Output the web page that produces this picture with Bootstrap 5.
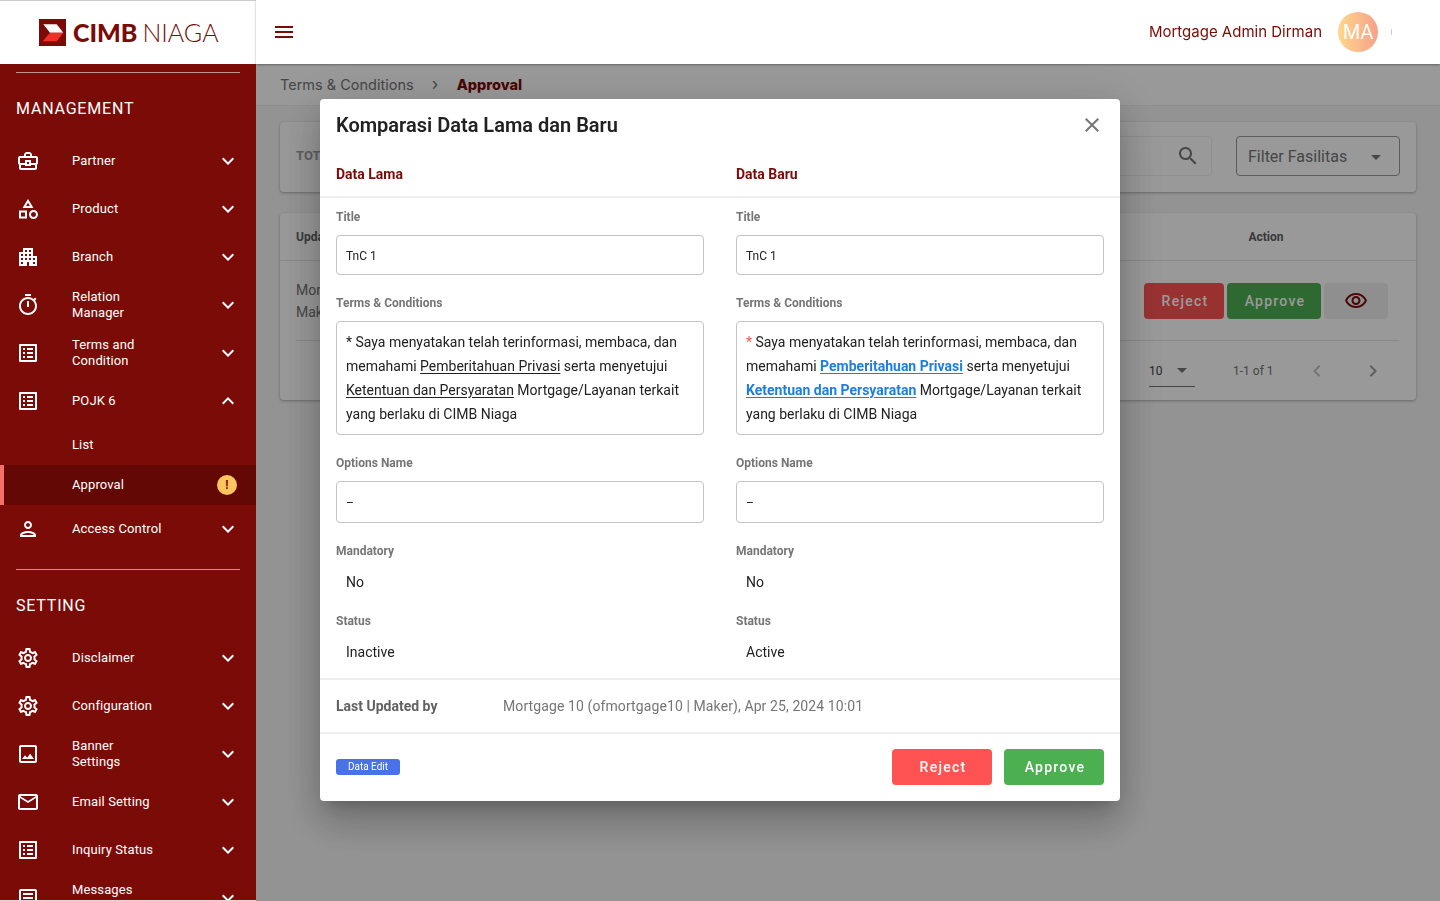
<!DOCTYPE html>
<html lang="id">
<head>
<meta charset="utf-8">
<title>Approval</title>
<link href="https://cdn.jsdelivr.net/npm/bootstrap@5.3.0/dist/css/bootstrap.min.css" rel="stylesheet">
<style>
html,body{height:100%;overflow:hidden}
body{font-family:Roboto,"Liberation Sans",sans-serif;background:#f6f6f6;color:#212121;font-size:14px}
.app-shell{height:901px}
.side{width:256px;flex:none;background:#7a0b07;color:#fff;overflow:hidden;position:relative;z-index:1050;height:901px;border-bottom:1px solid #d8d8d8}
.brand{height:64px;background:#fff;border-top:1px solid #ccc;padding-left:39px}
.brand-name{font-family:Lato,sans-serif;color:#7a0b07;font-size:25px;line-height:27px;margin-left:7px;white-space:nowrap}
.brand-name b{font-weight:900}
.brand-name span{font-weight:300;margin-left:5px}
.side-rule{height:1px;background:rgba(255,255,255,.55);margin:0 16px}
.side-head{height:64px;padding:24px 16px 0;font-size:16px;line-height:24px;font-weight:400;letter-spacing:.8px}
.side-row{height:48px;padding:0 16px;font-size:13px;font-weight:400;letter-spacing:.12px;line-height:16px}
.side-row .ico{width:24px;height:24px;fill:#fff;flex:none;margin-right:32px}
.side-row .chev{width:24px;height:24px;fill:#fff;flex:none;margin-left:auto}
.sub-row{padding-left:72px;height:40px}
.sub-on{height:40px;background:#630805;border-left:4px solid #f47068;padding-left:68px;padding-right:19px}
.warn-dot{width:20px;height:20px;border-radius:50%;background:#fdc55e;color:#7a0b07;font-size:12px;font-weight:700;margin-left:auto}
.msg-label{padding-bottom:16px}
.mainp{min-width:0}
.topbar{height:64px;background:#fff;position:relative;z-index:1050;padding:0 48px 0 16px;box-shadow:0 1px 2px rgba(0,0,0,.35)}
.poppin{font-family:Inter,"Open Sans",sans-serif}
.top-user{color:#7a0b07;font-size:15px}
.avatar{width:40px;height:40px;border-radius:50%;background:linear-gradient(90deg,#fdd88b,#f8a08a);color:#fff;font-size:20px;margin-left:16px}
.top-tick{width:1px;height:6px;background:#ccc;margin-left:13px}
.crumbs{height:42px;background:#fff;padding:0 24px;border-bottom:1px solid #eee;font-size:14.5px;color:#757575}
.crumbs b{color:#7a0b07;font-weight:800}
.crumb-sep{width:43px;text-align:center;font-size:17px;line-height:1}
.canvas{padding:16px 24px}
.pane{background:#fff;border-radius:4px;box-shadow:0 1px 3px rgba(0,0,0,.3)}
.pane-top{height:70px;padding:13px 16px 15px;margin-bottom:21px}
.pane-tot{color:#9e9e9e;font-weight:700;font-size:13px}
.search-box{width:300px;height:40px;border:1px solid #eee;border-radius:4px;padding:0 11px 0 12px;margin-left:auto;margin-right:24px}
.search-box svg{margin-left:auto;fill:#757575}
.filter-box{width:164px;height:40px;border:1px solid #9a9a9a;border-radius:4px;padding:2px 18px 0 11px;font-size:16px;color:#757575}
.caret-d{width:0;height:0;border:5px solid transparent;border-top-color:#757575;border-bottom:0;margin-left:auto}
.pane-tab{height:187px;padding:0 16px}
.tab-head{height:48px;font-size:12px;font-weight:700;color:#616161;border-bottom:1px solid #e4e4e4;margin:0 -16px;padding:0 16px}
.tab-act{width:268px;margin-left:auto;text-align:center}
.tab-row{height:80px;color:#757575;border-bottom:1px solid #e4e4e4;margin-right:1px;line-height:22px}
.act-group{gap:3px;margin-right:11px}
.act-btn{height:36px;border:0;border-radius:4px;color:#fff;font-size:14px;font-weight:500;letter-spacing:1.25px;padding:1px 0 0 2px}
.btn-rej{background:#ff5252;color:#fff}
.btn-rej:hover{background:#ff5252;color:#fff}
.btn-app{background:#4caf50;color:#fff}
.btn-app:hover{background:#4caf50;color:#fff}
.tab-row .btn-rej{width:80px}
.tab-row .btn-app{width:94px}
.eye-btn{width:64px;height:36px;background:#eee;border-radius:4px;fill:#7a0b07}
.pager{height:59px;font-size:12px;color:#757575}
.pager-size{width:46px;height:32px;border-bottom:1px solid #757575;color:#424242;margin-left:auto;margin-top:1px}
.pager-size .caret-d{margin-right:8px}
.pager-count{width:40px;margin-left:38px;white-space:nowrap}
.pager-nav{fill:#9e9e9e;width:24px;height:24px;margin-left:32px}
.pager-prev{fill:#c4c4c4}
.pager-next{margin-right:15px}
.screen{position:fixed;inset:0;z-index:1040;background:rgba(0,0,0,.4);padding-top:99px}
.compare{width:800px;height:702px;margin:0 auto;background:#fff;border:0;border-radius:4px;box-shadow:0 11px 15px -7px rgba(0,0,0,.2),0 24px 38px 3px rgba(0,0,0,.14),0 9px 46px 8px rgba(0,0,0,.12)}
.cmp-title{height:65px;padding:14px 16px 0}
.cmp-title h2{font-size:20px;line-height:24px;font-weight:600;margin:0;color:#212121}
.cmp-title svg{width:24px;height:24px;fill:#757575;margin-left:auto}
.cmp-heads{color:#7a0b07;font-weight:700;font-size:14px;line-height:20px;height:34px;border-bottom:2px solid #eee;margin:0;--bs-gutter-x:0}
.cmp-heads>div,.cmp-cols>div{padding:0 16px}
.cmp-cols{padding-top:11px;height:482px;border-bottom:2px solid #eee;margin:0;--bs-gutter-x:0}
.fld-label{font-size:12px;line-height:16px;font-weight:700;color:#757575;margin-bottom:10px}
.fld-box{border:1px solid #c4c4c4;border-radius:4px;padding:0 9px;color:#212121;font-size:14px;margin-bottom:20px}
.fld-sm{height:40px;font-size:12px;padding-top:2px}
.fld-md{height:42px;font-size:12px;padding-top:2px}
.fld-text{padding:8px 9px;line-height:24px;height:114px}
.fld-text u{text-underline-offset:2px}
.fld-link{color:#1e7ee0;font-weight:700;text-decoration:underline;text-underline-offset:2px}
.fld-star{color:#ff5252}
.fld-val{line-height:24px;padding:1px 0 0 10px;margin-bottom:19px}
.cmp-meta{height:54px;padding:0 16px;border-bottom:2px solid #eee}
.cmp-meta b{width:167px;font-weight:700;color:#616161}
.cmp-meta span{color:#757575;letter-spacing:.1px}
.cmp-foot{padding:15px 16px 0}
.tag-edit{width:64px;height:16px;background:#4a72e8;color:#fff;border-radius:3px;font-size:10px;line-height:16px;text-align:center}
.cmp-foot .act-btn{width:100px}
</style>
</head>
<body>
<svg width="0" height="0" class="d-none">
<symbol id="i-bag" viewBox="0 0 24 24"><path d="M20 7h-4V5l-2-2h-4L8 5v2H4c-1.1 0-2 .9-2 2v5c0 .75.4 1.38 1 1.73V19c0 1.11.89 2 2 2h14c1.11 0 2-.89 2-2v-3.28c.59-.35 1-.99 1-1.72V9c0-1.1-.9-2-2-2zM10 5h4v2h-4V5zM4 9h16v5h-5v-3H9v3H4V9zm9 6h-2v-2h2v2zm6 4H5v-3h4v1h6v-1h4v3z"/></symbol>
<symbol id="i-cat" viewBox="0 0 24 24"><path d="M12 2l-5.5 9h11L12 2zm0 3.84L13.93 9h-3.87L12 5.84zM17.5 13c-2.49 0-4.5 2.01-4.5 4.5s2.01 4.5 4.5 4.5 4.5-2.01 4.5-4.5-2.01-4.5-4.5-4.5zm0 7c-1.38 0-2.5-1.12-2.5-2.5s1.12-2.5 2.5-2.5 2.5 1.12 2.5 2.5-1.12 2.5-2.5 2.5zM3 21.5h8v-8H3v8zm2-6h4v4H5v-4z"/></symbol>
<symbol id="i-apt" viewBox="0 0 24 24"><path d="M17 11V3H7v4H3v14h8v-4h2v4h8V11h-4zM7 19H5v-2h2v2zm0-4H5v-2h2v2zm0-4H5V9h2v2zm4 4H9v-2h2v2zm0-4H9V9h2v2zm0-4H9V5h2v2zm4 8h-2v-2h2v2zm0-4h-2V9h2v2zm0-4h-2V5h2v2zm4 12h-2v-2h2v2zm0-4h-2v-2h2v2z"/></symbol>
<symbol id="i-timer" viewBox="0 0 24 24"><path d="M15 1H9v2h6V1zm-4 13h2V8h-2v6zm8.03-6.61l1.42-1.42c-.43-.51-.9-.99-1.41-1.41l-1.42 1.42C16.07 4.74 14.12 4 12 4c-4.97 0-9 4.03-9 9s4.02 9 9 9 9-4.03 9-9c0-2.12-.74-4.07-1.97-5.61zM12 20c-3.87 0-7-3.13-7-7s3.13-7 7-7 7 3.13 7 7-3.13 7-7 7z"/></symbol>
<symbol id="i-list" viewBox="0 0 24 24"><path d="M11 7h6v2h-6zm0 4h6v2h-6zm0 4h6v2h-6zM7 7h2v2H7zm0 4h2v2H7zm0 4h2v2H7zM20.1 3H3.9c-.5 0-.9.4-.9.9v16.2c0 .4.4.9.9.9h16.2c.4 0 .9-.5.9-.9V3.9c0-.5-.5-.9-.9-.9zM19 19H5V5h14v14z"/></symbol>
<symbol id="i-person" viewBox="0 0 24 24"><path d="M12 6c1.1 0 2 .9 2 2s-.9 2-2 2-2-.9-2-2 .9-2 2-2m0 10c2.7 0 5.8 1.29 6 2H6c.23-.72 3.31-2 6-2m0-12C9.79 4 8 5.79 8 8s1.79 4 4 4 4-1.79 4-4-1.79-4-4-4zm0 10c-2.67 0-8 1.34-8 4v2h16v-2c0-2.66-5.33-4-8-4z"/></symbol>
<symbol id="i-gear" viewBox="0 0 24 24"><path d="M19.43 12.98c.04-.32.07-.64.07-.98 0-.34-.03-.66-.07-.98l2.11-1.65c.19-.15.24-.42.12-.64l-2-3.46c-.09-.16-.26-.25-.44-.25-.06 0-.12.01-.17.03l-2.49 1c-.52-.4-1.08-.73-1.69-.98l-.38-2.65C14.46 2.18 14.25 2 14 2h-4c-.25 0-.46.18-.49.42l-.38 2.65c-.61.25-1.17.59-1.69.98l-2.49-1c-.06-.02-.12-.03-.18-.03-.17 0-.34.09-.43.25l-2 3.46c-.13.22-.07.49.12.64l2.11 1.65c-.04.32-.07.65-.07.98 0 .33.03.66.07.98l-2.11 1.65c-.19.15-.24.42-.12.64l2 3.46c.09.16.26.25.44.25.06 0 .12-.01.17-.03l2.49-1c.52.4 1.08.73 1.69.98l.38 2.65c.03.24.24.42.49.42h4c.25 0 .46-.18.49-.42l.38-2.65c.61-.25 1.17-.59 1.69-.98l2.49 1c.06.02.12.03.18.03.17 0 .34-.09.43-.25l2-3.46c.12-.22.07-.49-.12-.64l-2.11-1.65zm-1.98-1.71c.04.31.05.52.05.73 0 .21-.02.43-.05.73l-.14 1.13.89.7 1.08.84-.7 1.21-1.27-.51-1.04-.42-.9.68c-.43.32-.84.56-1.25.73l-1.06.43-.16 1.13-.2 1.35h-1.4l-.19-1.35-.16-1.13-1.06-.43c-.43-.18-.83-.41-1.23-.71l-.91-.7-1.06.43-1.27.51-.7-1.21 1.08-.84.89-.7-.14-1.13c-.03-.31-.05-.54-.05-.74s.02-.43.05-.73l.14-1.13-.89-.7-1.08-.84.7-1.21 1.27.51 1.04.42.9-.68c.43-.32.84-.56 1.25-.73l1.06-.43.16-1.13.2-1.35h1.39l.19 1.35.16 1.13 1.06.43c.43.18.83.41 1.23.71l.91.7 1.06-.43 1.27-.51.7 1.21-1.07.85-.89.7.14 1.13zM12 8c-2.21 0-4 1.79-4 4s1.79 4 4 4 4-1.79 4-4-1.79-4-4-4zm0 6c-1.1 0-2-.9-2-2s.9-2 2-2 2 .9 2 2-.9 2-2 2z"/></symbol>
<symbol id="i-img" viewBox="0 0 24 24"><path d="M19 5v14H5V5h14m0-2H5c-1.1 0-2 .9-2 2v14c0 1.1.9 2 2 2h14c1.1 0 2-.9 2-2V5c0-1.1-.9-2-2-2zm-4.86 8.86l-3 3.87L9 13.14 6 17h12l-3.86-5.14z"/></symbol>
<symbol id="i-mail" viewBox="0 0 24 24"><path d="M22 6c0-1.1-.9-2-2-2H4c-1.1 0-2 .9-2 2v12c0 1.1.9 2 2 2h16c1.1 0 2-.9 2-2V6zm-2 0l-8 5-8-5h16zm0 12H4V8l8 5 8-5v10z"/></symbol>
<symbol id="i-art" viewBox="0 0 24 24"><path d="M19 3H5c-1.1 0-2 .9-2 2v14c0 1.1.9 2 2 2h14c1.1 0 2-.9 2-2V5c0-1.1-.9-2-2-2zm0 16H5V5h14v14zM7 7h10v2H7zm0 4h10v2H7zm0 4h7v2H7z"/></symbol>
<symbol id="i-down" viewBox="0 0 24 24"><path d="M16.59 8.59L12 13.17 7.41 8.59 6 10l6 6 6-6z"/></symbol>
<symbol id="i-up" viewBox="0 0 24 24"><path d="M12 8l-6 6 1.41 1.41L12 10.83l4.59 4.58L18 14z"/></symbol>
</svg>

<div class="app-shell d-flex">
  <aside class="side">
    <div class="brand d-flex align-items-center">
      <svg width="27" height="27" viewBox="0 0 27 27"><rect width="27" height="27" fill="#7a0b07"/><path d="M4.3 5.3H17.7L24.3 13.7H11z" fill="#fff"/><path d="M11 13.7H24.3L17.7 22.3H3.7z" fill="#ee3124"/></svg>
      <div class="brand-name"><b>CIMB</b><span>NIAGA</span></div>
    </div>
    <div class="side-rule mt-2"></div>
    <div class="side-head">MANAGEMENT</div>
    <div class="side-row d-flex align-items-center"><svg class="ico"><use href="#i-bag"/></svg><span>Partner</span><svg class="chev"><use href="#i-down"/></svg></div>
    <div class="side-row d-flex align-items-center"><svg class="ico"><use href="#i-cat"/></svg><span>Product</span><svg class="chev"><use href="#i-down"/></svg></div>
    <div class="side-row d-flex align-items-center"><svg class="ico"><use href="#i-apt"/></svg><span>Branch</span><svg class="chev"><use href="#i-down"/></svg></div>
    <div class="side-row d-flex align-items-center"><svg class="ico"><use href="#i-timer"/></svg><span>Relation<br>Manager</span><svg class="chev"><use href="#i-down"/></svg></div>
    <div class="side-row d-flex align-items-center"><svg class="ico"><use href="#i-list"/></svg><span>Terms and<br>Condition</span><svg class="chev"><use href="#i-down"/></svg></div>
    <div class="side-row d-flex align-items-center"><svg class="ico"><use href="#i-list"/></svg><span>POJK 6</span><svg class="chev"><use href="#i-up"/></svg></div>
    <div class="side-row sub-row d-flex align-items-center"><span>List</span></div>
    <div class="side-row sub-on d-flex align-items-center"><span>Approval</span><span class="warn-dot d-flex align-items-center justify-content-center">!</span></div>
    <div class="side-row d-flex align-items-center"><svg class="ico"><use href="#i-person"/></svg><span>Access Control</span><svg class="chev"><use href="#i-down"/></svg></div>
    <div class="side-rule mt-3"></div>
    <div class="side-head">SETTING</div>
    <div class="side-row d-flex align-items-center"><svg class="ico"><use href="#i-gear"/></svg><span>Disclaimer</span><svg class="chev"><use href="#i-down"/></svg></div>
    <div class="side-row d-flex align-items-center"><svg class="ico"><use href="#i-gear"/></svg><span>Configuration</span><svg class="chev"><use href="#i-down"/></svg></div>
    <div class="side-row d-flex align-items-center"><svg class="ico"><use href="#i-img"/></svg><span>Banner<br>Settings</span><svg class="chev"><use href="#i-down"/></svg></div>
    <div class="side-row d-flex align-items-center"><svg class="ico"><use href="#i-mail"/></svg><span>Email Setting</span><svg class="chev"><use href="#i-down"/></svg></div>
    <div class="side-row d-flex align-items-center"><svg class="ico"><use href="#i-list"/></svg><span>Inquiry Status</span><svg class="chev"><use href="#i-down"/></svg></div>
    <div class="side-row d-flex align-items-center"><svg class="ico"><use href="#i-art"/></svg><span class="msg-label">Messages</span><svg class="chev"><use href="#i-down"/></svg></div>
  </aside>

  <div class="mainp flex-grow-1 d-flex flex-column">
    <header class="topbar d-flex align-items-center">
      <svg width="24" height="24" viewBox="0 0 24 24" fill="#7a0b07"><path d="M3 18h18v-2H3v2zm0-5h18v-2H3v2zm0-7v2h18V6H3z"/></svg>
      <span class="top-user poppin ms-auto">Mortgage Admin Dirman</span>
      <span class="avatar d-flex align-items-center justify-content-center">MA</span>
      <span class="top-tick"></span>
    </header>
    <div class="crumbs poppin d-flex align-items-center"><span>Terms &amp; Conditions</span><span class="crumb-sep">&#8250;</span><b>Approval</b></div>
    <main class="canvas">
      <section class="pane pane-top d-flex align-items-center">
        <span class="pane-tot">TOTAL</span>
        <div class="search-box d-flex align-items-center"><svg width="24" height="24" viewBox="0 0 24 24"><path d="M15.5 14h-.79l-.28-.27C15.41 12.59 16 11.11 16 9.5 16 5.91 13.09 3 9.5 3S3 5.91 3 9.5 5.91 16 9.5 16c1.61 0 3.09-.59 4.23-1.57l.27.28v.79l5 4.99L20.49 19l-4.99-5zm-6 0C7.01 14 5 11.99 5 9.5S7.01 5 9.5 5 14 7.01 14 9.5 11.99 14 9.5 14z"/></svg></div>
        <div class="filter-box d-flex align-items-center"><span>Filter Fasilitas</span><i class="caret-d"></i></div>
      </section>
      <section class="pane pane-tab">
        <div class="tab-head d-flex align-items-center"><span>Updated by</span><span class="tab-act">Action</span></div>
        <div class="tab-row d-flex align-items-center">
          <div>Mortgage 10<br>Maker</div>
          <div class="act-group ms-auto d-flex align-items-center">
            <button class="btn act-btn btn-rej" type="button">Reject</button>
            <button class="btn act-btn btn-app" type="button">Approve</button>
            <div class="eye-btn d-flex align-items-center justify-content-center"><svg width="24" height="24" viewBox="0 0 24 24"><path d="M12 6c3.79 0 7.17 2.13 8.82 5.5C19.17 14.87 15.79 17 12 17s-7.17-2.13-8.82-5.5C4.83 8.13 8.21 6 12 6m0-2C7 4 2.73 7.11 1 11.5 2.73 15.89 7 19 12 19s9.27-3.11 11-7.5C21.27 7.11 17 4 12 4zm0 5c1.38 0 2.5 1.12 2.5 2.5S13.38 14 12 14s-2.5-1.12-2.5-2.5S10.62 9 12 9m0-2c-2.48 0-4.5 2.02-4.5 4.5S9.52 16 12 16s4.5-2.02 4.5-4.5S14.48 7 12 7z"/></svg></div>
          </div>
        </div>
        <div class="pager d-flex align-items-center">
          <div class="pager-size d-flex align-items-center"><span>10</span><i class="caret-d"></i></div>
          <span class="pager-count">1-1 of 1</span>
          <svg class="pager-nav pager-prev" viewBox="0 0 24 24"><path d="M15.41 7.41L14 6l-6 6 6 6 1.41-1.41L10.83 12z"/></svg>
          <svg class="pager-nav pager-next" viewBox="0 0 24 24"><path d="M10 6L8.59 7.41 13.17 12l-4.58 4.59L10 18l6-6z"/></svg>
        </div>
      </section>
    </main>
  </div>
</div>

<div class="screen">
  <div class="compare modal-content">
    <div class="cmp-title d-flex align-items-start">
      <h2>Komparasi Data Lama dan Baru</h2>
      <svg viewBox="0 0 24 24"><path d="M19 6.41L17.59 5 12 10.59 6.41 5 5 6.41 10.59 12 5 17.59 6.41 19 12 13.41 17.59 19 19 17.59 13.41 12z"/></svg>
    </div>
    <div class="row cmp-heads"><div class="col-6">Data Lama</div><div class="col-6">Data Baru</div></div>
    <div class="row cmp-cols">
      <div class="col-6">
        <div class="fld-label">Title</div>
        <div class="fld-box fld-sm d-flex align-items-center">TnC 1</div>
        <div class="fld-label">Terms &amp; Conditions</div>
        <div class="fld-box fld-text">* Saya menyatakan telah terinformasi, membaca, dan memahami <u>Pemberitahuan Privasi</u> serta menyetujui <u>Ketentuan dan Persyaratan</u> Mortgage/Layanan terkait yang berlaku di CIMB Niaga</div>
        <div class="fld-label">Options Name</div>
        <div class="fld-box fld-md d-flex align-items-center">&ndash;</div>
        <div class="fld-label">Mandatory</div>
        <div class="fld-val">No</div>
        <div class="fld-label">Status</div>
        <div class="fld-val">Inactive</div>
      </div>
      <div class="col-6">
        <div class="fld-label">Title</div>
        <div class="fld-box fld-sm d-flex align-items-center">TnC 1</div>
        <div class="fld-label">Terms &amp; Conditions</div>
        <div class="fld-box fld-text"><span class="fld-star">*</span> Saya menyatakan telah terinformasi, membaca, dan memahami <a class="fld-link" href="#">Pemberitahuan Privasi</a> serta menyetujui <a class="fld-link" href="#">Ketentuan dan Persyaratan</a> Mortgage/Layanan terkait yang berlaku di CIMB Niaga</div>
        <div class="fld-label">Options Name</div>
        <div class="fld-box fld-md d-flex align-items-center">&ndash;</div>
        <div class="fld-label">Mandatory</div>
        <div class="fld-val">No</div>
        <div class="fld-label">Status</div>
        <div class="fld-val">Active</div>
      </div>
    </div>
    <div class="cmp-meta d-flex align-items-center"><b>Last Updated by</b><span>Mortgage 10 (ofmortgage10 | Maker), Apr 25, 2024 10:01</span></div>
    <div class="cmp-foot d-flex align-items-center gap-2">
      <span class="tag-edit">Data Edit</span>
      <button class="btn act-btn btn-rej ms-auto" type="button">Reject</button>
      <button class="btn act-btn btn-app ms-1" type="button">Approve</button>
    </div>
  </div>
</div>
<script src="https://cdn.jsdelivr.net/npm/bootstrap@5.3.0/dist/js/bootstrap.bundle.min.js"></script>
</body>
</html>
